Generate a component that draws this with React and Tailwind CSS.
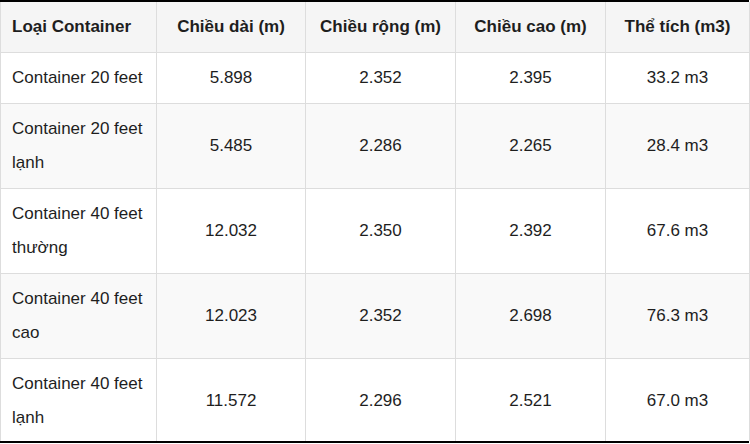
import React from "react";

const rows = [
  ["Container 20 feet", "5.898", "2.352", "2.395", "33.2 m3"],
  ["Container 20 feet lạnh", "5.485", "2.286", "2.265", "28.4 m3"],
  ["Container 40 feet thường", "12.032", "2.350", "2.392", "67.6 m3"],
  ["Container 40 feet cao", "12.023", "2.352", "2.698", "76.3 m3"],
  ["Container 40 feet lạnh", "11.572", "2.296", "2.521", "67.0 m3"],
];

const headers = ["Loại Container", "Chiều dài (m)", "Chiều rộng (m)", "Chiều cao (m)", "Thể tích (m3)"];

export default function App() {
  return (
    <div
      className="w-[750px] h-[444px] bg-white overflow-hidden"
      style={{ fontFamily: '"Liberation Sans", Arial, sans-serif' }}
    >
      <div className="w-[749px] border-t-2 border-b-2 border-black">
        <table className="w-[749px] border-collapse table-fixed text-[17px] leading-[34px] text-[#1e1e1e]">
          <colgroup>
            <col className="w-[156px]" />
            <col className="w-[149px]" />
            <col className="w-[150px]" />
            <col className="w-[150px]" />
            <col className="w-[144px]" />
          </colgroup>
          <thead>
            <tr className="bg-[#f5f5f5]">
              {headers.map((h, i) => (
                <th
                  key={h}
                  className={`border-x border-b border-[#dddddd] py-[8px] px-[11px] font-bold align-middle ${
                    i === 0 ? "text-left" : "text-center"
                  }`}
                >
                  {h}
                </th>
              ))}
            </tr>
          </thead>
          <tbody>
            {rows.map((r, ri) => (
              <tr key={ri} className={ri % 2 === 1 ? "bg-[#f9f9f9]" : "bg-white"}>
                {r.map((c, ci) => (
                  <td
                    key={ci}
                    className={`border-x border-[#dddddd] px-[11px] align-middle ${
                      ri === rows.length - 1 ? "pt-[8px] pb-[6px]" : "py-[8px] border-b"
                    } ${ci === 0 ? "text-left" : "text-center"}`}
                  >
                    {c}
                  </td>
                ))}
              </tr>
            ))}
          </tbody>
        </table>
      </div>
    </div>
  );
}
